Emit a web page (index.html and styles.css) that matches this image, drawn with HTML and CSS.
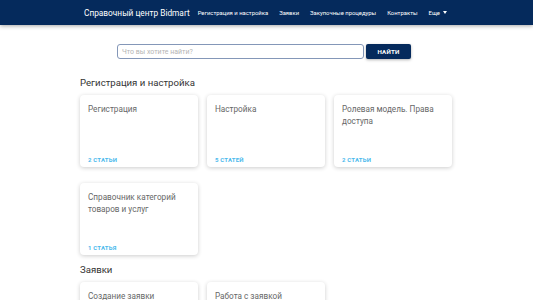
FILE: index.html
```html
<!DOCTYPE html>
<html lang="ru">
<head>
  <meta charset="UTF-8">
  <meta name="viewport" content="width=device-width, initial-scale=1.0">
  <title>Справочный центр Bidmart</title>
  <link rel="stylesheet" href="styles.css">
</head>
<body>
  <header class="topbar">
    <div class="topbar-inner">
      <a class="brand" href="#">Справочный центр Bidmart</a>
      <nav class="nav">
        <a href="#">Регистрация и настройка</a>
        <a href="#">Заявки</a>
        <a href="#">Закупочные процедуры</a>
        <a href="#">Контракты</a>
        <a href="#" class="more">Еще <span class="caret"></span></a>
      </nav>
    </div>
  </header>

  <main class="container">
    <form class="search">
      <input type="text" class="search-input" placeholder="Что вы хотите найти?">
      <button type="button" class="search-button">Найти</button>
    </form>

    <section class="section">
      <h2 class="section-title">Регистрация и настройка</h2>
      <div class="cards">
        <a class="card" href="#">
          <div class="card-title">Регистрация</div>
          <div class="card-count">2 статьи</div>
        </a>
        <a class="card" href="#">
          <div class="card-title">Настройка</div>
          <div class="card-count">5 статей</div>
        </a>
        <a class="card" href="#">
          <div class="card-title">Ролевая модель. Права доступа</div>
          <div class="card-count">2 статьи</div>
        </a>
        <a class="card" href="#">
          <div class="card-title">Справочник категорий товаров и услуг</div>
          <div class="card-count">1 статья</div>
        </a>
      </div>
    </section>

    <section class="section">
      <h2 class="section-title">Заявки</h2>
      <div class="cards">
        <a class="card" href="#">
          <div class="card-title">Создание заявки</div>
          <div class="card-count">3 статьи</div>
        </a>
        <a class="card" href="#">
          <div class="card-title">Работа с заявкой</div>
          <div class="card-count">4 статьи</div>
        </a>
      </div>
    </section>
  </main>
</body>
</html>
```

FILE: styles.css
```css
/* Reset */
body, h2 {
  margin: 0;
  padding: 0;
}

body {
  font-family: Roboto, 'Noto Sans', sans-serif;
  background-color: #fff;
  color: #333;
}

a {
  text-decoration: none;
  color: inherit;
}

/* Top bar */
.topbar {
  background-color: #052a5c;
  height: 25px;
  box-shadow: 0 1px 4px rgba(0, 0, 0, 0.35);
  position: relative;
  z-index: 2;
}

.topbar-inner {
  width: 373px;
  margin: 0 auto;
  height: 100%;
  display: flex;
  align-items: center;
  padding: 0 4px;
  box-sizing: border-box;
}

.brand {
  color: #fff;
  font-size: 8.3px;
  margin-right: 8px;
  white-space: nowrap;
}

.nav {
  display: flex;
  align-items: center;
  gap: 11px;
}

.nav a {
  color: #fff;
  font-size: 5.9px;
  white-space: nowrap;
}

.caret {
  display: inline-block;
  width: 0;
  height: 0;
  margin-left: 2px;
  vertical-align: 1px;
  border-left: 2.5px solid transparent;
  border-right: 2.5px solid transparent;
  border-top: 3px solid #fff;
}

/* Main */
.container {
  width: 373px;
  margin: 0 auto;
}

/* Search */
.search {
  display: flex;
  justify-content: center;
  gap: 2px;
  margin-top: 19px;
  margin-bottom: 18px;
  padding-right: 5px;
}

.search-input {
  width: 247px;
  height: 15px;
  box-sizing: border-box;
  border: 1px solid #8497b8;
  border-radius: 3px;
  padding: 0 4px;
  font-family: inherit;
  font-size: 7px;
  outline: none;
}

.search-input::placeholder {
  color: #b5b5b5;
}

.search-button {
  width: 45px;
  height: 15px;
  border: none;
  border-radius: 2px;
  background-color: #052a5c;
  color: #fff;
  font-family: inherit;
  font-weight: bold;
  font-size: 6.2px;
  text-transform: uppercase;
  letter-spacing: 0.2px;
  box-shadow: 0 1px 3px rgba(0, 0, 0, 0.3);
}

/* Sections */
.section-title {
  font-size: 9.6px;
  font-weight: normal;
  color: #333;
  margin-bottom: 6.5px;
}

.cards {
  display: grid;
  grid-template-columns: repeat(3, 118px);
  column-gap: 9px;
  row-gap: 16px;
  margin-bottom: 9.5px;
}

.card {
  height: 72px;
  box-sizing: border-box;
  padding: 8px 8px 4px;
  border-radius: 4px;
  background-color: #fff;
  box-shadow: 0 1px 4px rgba(0, 0, 0, 0.2);
  display: flex;
  flex-direction: column;
  justify-content: space-between;
}

.card-title {
  font-size: 8.2px;
  line-height: 12px;
  color: #676767;
}

.card-count {
  font-size: 6px;
  font-weight: bold;
  color: #4ab9ec;
  text-transform: uppercase;
  letter-spacing: 0.2px;
}
```
